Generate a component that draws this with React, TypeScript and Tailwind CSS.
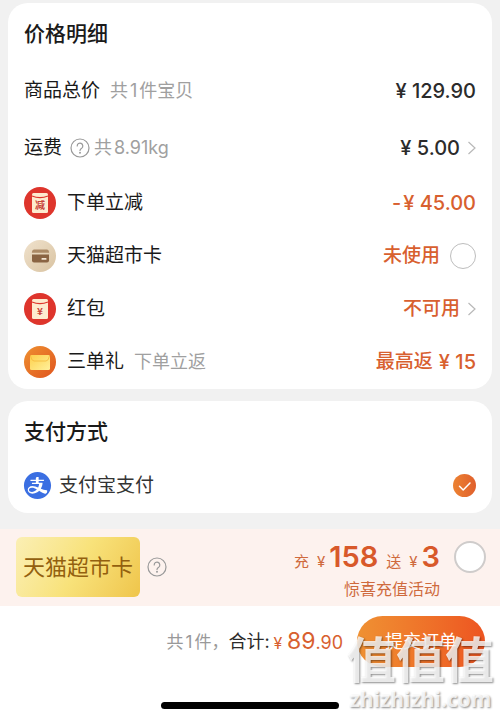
import { useState, type ReactNode } from 'react';
import { AiFillAlipayCircle } from 'react-icons/ai';

function RedPacketIcon({ mark }: { mark: string }) {
    return (
        <svg viewBox="0 0 32 32" className="size-8 shrink-0" aria-hidden="true">
            <circle cx="16" cy="16" r="16" fill="#de352c" />
            <rect x="8" y="6" width="16" height="20" rx="1.5" fill="#fdebcf" />
            <path d="M8 9 Q16 12.200 24 9" fill="none" stroke="#de352c" strokeWidth="1.1" />
            <text x="16" y="21.8" textAnchor="middle" fontSize="10" fontWeight="700" fill="#c8433a" fontFamily="'Noto Sans CJK SC', sans-serif">
                {mark}
            </text>
        </svg>
    );
}

function MarketCardIcon() {
    return (
        <svg viewBox="0 0 32 32" className="size-8 shrink-0" aria-hidden="true">
            <defs>
                <linearGradient id="beige" x1="0" y1="0" x2="1" y2="1">
                    <stop offset="0" stopColor="#f0e2cd" />
                    <stop offset="1" stopColor="#d9c3a1" />
                </linearGradient>
            </defs>
            <circle cx="16" cy="16" r="16" fill="url(#beige)" />
            <path d="M10 9.500h13a2 2 0 0 1 1.800 1.500l.4 1.800H7.800l.4-1.800A2 2 0 0 1 10 9.500z" fill="#ab8a66" />
            <path d="M8 14.500h17V20.500a2 2 0 0 1-2 2H10a2 2 0 0 1-2-2z" fill="#8a6443" />
            <rect x="17.500" y="18" width="5" height="1.800" rx="0.6" fill="#f3e6d3" />
        </svg>
    );
}

function GiftIcon() {
    return (
        <svg viewBox="0 0 32 32" className="size-8 shrink-0" aria-hidden="true">
            <defs>
                <linearGradient id="orange" x1="0" y1="0" x2="1" y2="1">
                    <stop offset="0" stopColor="#ee9030" />
                    <stop offset="1" stopColor="#e0551f" />
                </linearGradient>
                <linearGradient id="yellow" x1="0" y1="0" x2="1" y2="1">
                    <stop offset="0" stopColor="#fdd04c" />
                    <stop offset="1" stopColor="#fff09a" />
                </linearGradient>
            </defs>
            <circle cx="16" cy="16" r="16" fill="url(#orange)" />
            <rect x="6" y="9" width="20" height="15" rx="1.5" fill="url(#yellow)" />
            <path d="M6.5 9.8 Q7.5 15 10 15H22 Q24.5 15 25.5 9.8" fill="none" stroke="#f5b93c" strokeWidth="0.8" />
        </svg>
    );
}

function HelpButton({ label }: { label: string }) {
    return (
        <button type="button" aria-label={label} className="shrink-0 text-[#999]">
            <svg viewBox="0 0 20 20" className="size-5" fill="none" stroke="currentColor" strokeWidth="1.2" strokeLinecap="round">
                <circle cx="10" cy="10" r="9" />
                <path d="M7.2 8a2.8 2.8 0 1 1 4.6 2.1c-1 .8-1.8 1.2-1.8 2.3" />
                <circle cx="10" cy="14.7" r="0.4" fill="currentColor" />
            </svg>
        </button>
    );
}

function MoreButton({ label }: { label: string }) {
    return (
        <button type="button" aria-label={label} className="ml-1.5 shrink-0 text-[#b8b8b8]">
            <svg viewBox="0 0 10 14" className="h-3.5 w-2.5" fill="none" stroke="currentColor" strokeWidth="1.2">
                <path d="M2.500 1l6.500 6-6.500 6" />
            </svg>
        </button>
    );
}

function Row({ icon, label, note, children }: { icon: ReactNode; label: string; note?: string; children: ReactNode }) {
    return (
        <div className="flex h-[53px] items-center leading-8">
            {icon}
            <span className="ml-[11px] text-[19px]">{label}</span>
            {note && <span className="ml-2.5 text-[18px] text-[#a0a0a0]">{note}</span>}
            <div className="ml-auto flex items-center text-[19px] font-medium text-[#d8602f]">{children}</div>
        </div>
    );
}

export default function App() {
    const [useCard, setUseCard] = useState(false);
    const [recharge, setRecharge] = useState(false);

    return (
        <div className="flex min-h-screen flex-col bg-[#f1f1f1] font-['Inter','Noto_Sans_CJK_SC',sans-serif] text-[#1a1a1a]">
            <main className="flex flex-col gap-3 px-2 pt-[3px] pb-4">
                <section className="rounded-[20px] bg-white px-4 pb-px leading-8">
                    <h2 className="flex h-[59px] items-center pt-0.5 text-[21px] font-medium">价格明细</h2>
                    <div className="flex h-[57px] items-center">
                        <span className="text-[19px]">商品总价</span>
                        <span className="ml-2.5 text-[18px] text-[#a0a0a0]">共<span className="mx-0.5">1</span>件宝贝</span>
                        <span className="ml-auto text-[20px] font-medium text-[#2b2b2b]">¥ 129.90</span>
                    </div>
                    <div className="flex h-[57px] items-center">
                        <span className="mr-2 text-[19px]">运费</span>
                        <HelpButton label="运费说明" />
                        <span className="ml-1 text-[18px] text-[#a0a0a0]">共<span className="ml-0.5">8.91kg</span></span>
                        <span className="ml-auto text-[20px] font-medium text-[#2b2b2b]">¥ 5.00</span>
                        <MoreButton label="查看运费" />
                    </div>
                    <Row icon={<RedPacketIcon mark="减" />} label="下单立减">
                        <span className="text-[20px]">-<span className="ml-0.5">¥ 45.00</span></span>
                    </Row>
                    <Row icon={<MarketCardIcon />} label="天猫超市卡">
                        <label htmlFor="use-card">未使用</label>
                        <input
                            id="use-card"
                            type="checkbox"
                            checked={useCard}
                            onChange={(e) => setUseCard(e.target.checked)}
                            className="ml-2.5 size-[26px] appearance-none rounded-full border border-[#bdbdbd] bg-white checked:bg-[#ea6a2a]"
                        />
                    </Row>
                    <Row icon={<RedPacketIcon mark="¥" />} label="红包">
                        不可用
                        <MoreButton label="查看红包" />
                    </Row>
                    <Row icon={<GiftIcon />} label="三单礼" note="下单立返">
                        最高返<span className="ml-1.5 text-[20px]">¥ 15</span>
                    </Row>
                </section>

                <section className="rounded-[20px] bg-white px-4 pb-0.5 leading-8">
                    <h2 className="flex h-[59px] items-center pt-0.5 text-[21px] font-medium">支付方式</h2>
                    <div className="flex h-[51px] items-center">
                        <AiFillAlipayCircle className="-ml-0.5 size-[31px] shrink-0 text-[#3b6fe2]" />
                        <label htmlFor="alipay" className="ml-1.5 text-[19px] text-[#333]">支付宝支付</label>
                        <div className="relative ml-auto size-[23px]">
                            <input
                                id="alipay"
                                type="radio"
                                name="payment"
                                defaultChecked
                                className="block size-full appearance-none rounded-full bg-linear-to-r from-[#ec8232] to-[#e05f2c]"
                            />
                            <svg viewBox="0 0 23 23" className="pointer-events-none absolute inset-0" fill="none" stroke="#fff" strokeWidth="1.5" strokeLinecap="round" strokeLinejoin="round">
                                <path d="M6.500 12.200l3.700 3.800 6.800-7" />
                            </svg>
                        </div>
                    </div>
                </section>
            </main>

            <div className="flex items-center bg-[#fdf2ee] pt-2 pr-3.5 pb-[9px] pl-4">
                <div className="flex h-[60px] w-[124px] items-center justify-center rounded-md bg-linear-120 from-[#fbefb4] via-[#f8e27a] to-[#efc54a] text-[22px] text-[#93600f]">
                    天猫超市卡
                </div>
                <div className="ml-[7px] flex">
                    <HelpButton label="超市卡说明" />
                </div>
                <label htmlFor="recharge" className="ml-auto flex flex-col items-end text-[#cf6a3d]">
                    <span className="flex h-11 items-baseline gap-2 text-[15px] leading-10">
                        <span>充</span>
                        <span>¥<b className="ml-1 text-[29px] font-semibold text-[#d8592a]">158</b></span>
                        <span>送</span>
                        <span>¥<b className="ml-1 text-[29px] font-semibold text-[#d8592a]">3</b></span>
                    </span>
                    <span className="text-[16px] leading-4">惊喜充值活动</span>
                </label>
                <input
                    id="recharge"
                    type="checkbox"
                    checked={recharge}
                    onChange={(e) => setRecharge(e.target.checked)}
                    className="mt-1 ml-3.5 size-8 shrink-0 appearance-none self-start rounded-full border-2 border-[#cfcccb] bg-white checked:bg-[#ea6a2a]"
                />
            </div>

            <footer className="relative flex flex-1 flex-col bg-white">
                <div className="flex items-center justify-end pt-2.5 pr-[15px] leading-8">
                    <span className="text-[17px] text-[#999]">共<span className="mx-0.5">1</span>件，</span>
                    <span className="text-[18px] text-[#2b2b2b]">合计:</span>
                    <span className="ml-1 text-[16px] text-[#d8602f]">
                        ¥ <span className="text-[23px]">89</span><span className="text-[18px]">.90</span>
                    </span>
                    <button type="button" className="ml-3.5 h-[51px] w-32 rounded-full bg-linear-to-r from-[#ef9133] to-[#ed5421] text-[18px] text-white">
                        提交订单
                    </button>
                </div>
                <div className="mx-auto mt-[35px] mb-2.5 h-[7px] w-[178px] rounded-full bg-black" />
                <div className="pointer-events-none absolute right-1.5 bottom-2 flex flex-col items-center text-white/80 [text-shadow:1px_1px_2px_rgba(0,0,0,0.45)]">
                    <span className="text-[49px] leading-[52px] font-bold">值值值</span>
                    <span className="font-['Open_Sans'] text-[21px] leading-6 font-bold">zhizhizhi.com</span>
                </div>
            </footer>
        </div>
    );
}
